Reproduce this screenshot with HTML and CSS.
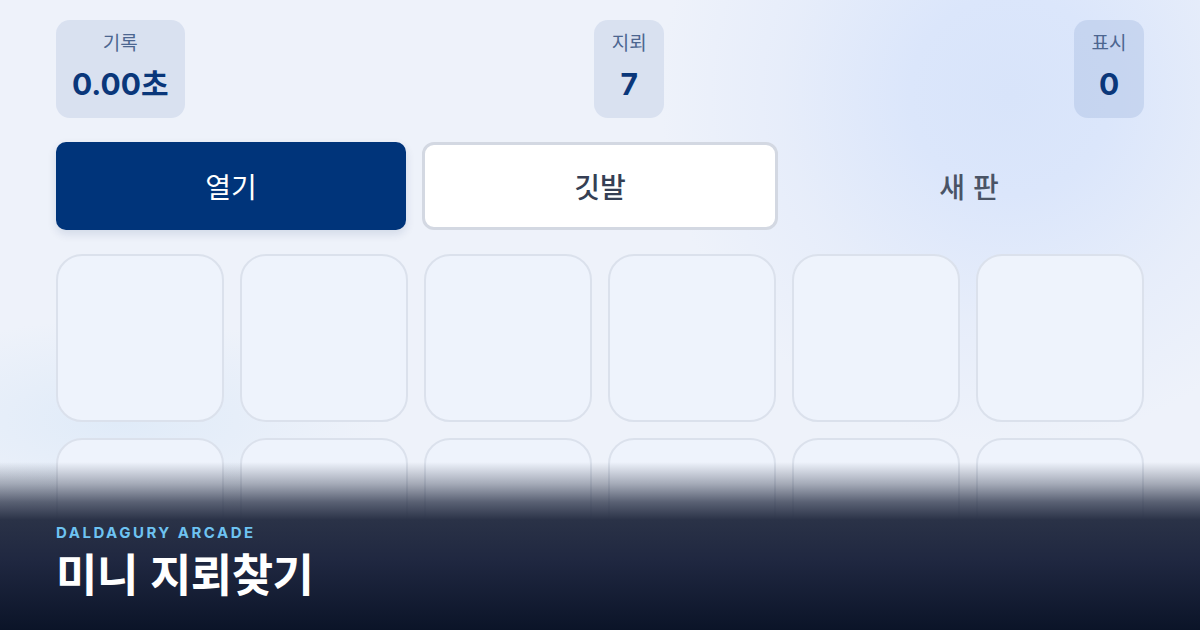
FILE: index.html
```html
<!DOCTYPE html>
<html lang="ko">
<head>
<meta charset="utf-8">
<title>미니 지뢰찾기</title>
<link rel="stylesheet" href="styles.css">
</head>
<body>
<div class="page">
  <div class="stats">
    <div class="stat"><div class="stat-label">기록</div><div class="stat-value">0.00초</div></div>
    <div class="stat"><div class="stat-label">지뢰</div><div class="stat-value">7</div></div>
    <div class="stat stat-glow"><div class="stat-label">표시</div><div class="stat-value">0</div></div>
  </div>
  <div class="actions">
    <button class="btn btn-primary">열기</button>
    <button class="btn btn-outline">깃발</button>
    <button class="btn btn-ghost">새 판</button>
  </div>
  <div class="board">
    <div class="cell"></div><div class="cell"></div><div class="cell"></div><div class="cell"></div><div class="cell"></div><div class="cell"></div>
    <div class="cell"></div><div class="cell"></div><div class="cell"></div><div class="cell"></div><div class="cell"></div><div class="cell"></div>
  </div>
</div>
<div class="banner">
  <div class="brand">DALDAGURY ARCADE</div>
  <div class="title">미니 지뢰찾기</div>
</div>
</body>
</html>
```
FILE: styles.css
```css
* { box-sizing: border-box; }
html, body { margin: 0; padding: 0; }
body {
  width: 1200px;
  height: 630px;
  overflow: hidden;
  position: relative;
  font-family: "Noto Sans CJK KR", "Noto Sans", sans-serif;
  background:
    radial-gradient(circle at 1010px 95px, #d8e4fa 0, #dbe6fb 100px, rgba(226,234,250,0.6) 230px, rgba(238,242,250,0) 350px),
    radial-gradient(ellipse at 120px 420px, rgba(222,234,248,0.9) 0, rgba(238,242,250,0) 260px),
    #eef2fa;
}
.page {
  padding: 20px 56px 0;
}
.stats {
  display: flex;
  justify-content: space-between;
  align-items: flex-start;
}
.stat {
  background: rgba(190, 205, 228, 0.45);
  border-radius: 14px;
  padding: 9px 16px 14px;
  display: flex;
  flex-direction: column;
  align-items: center;
  min-width: 70px;
}
.stat-glow { background: rgba(180, 198, 232, 0.55); }
.stat-label {
  font-size: 19px;
  line-height: 26px;
  color: #4c6690;
}
.stat-value {
  margin-top: 9px;
  font-family: "Inter", "Noto Sans CJK KR", sans-serif;
  font-size: 30px;
  line-height: 40px;
  font-weight: 700;
  color: #0a377a;
}
.actions {
  margin-top: 24px;
  display: grid;
  grid-template-columns: 1fr 356px 1fr;
  gap: 16px;
}
.btn {
  height: 88px;
  border-radius: 10px;
  font-family: "Noto Sans CJK KR", sans-serif;
  font-size: 28px;
  border: none;
  margin: 0;
  padding: 0;
}
.btn-primary {
  background: #00347a;
  color: #fff;
  font-weight: 400;
  box-shadow: 0 4px 10px rgba(0, 40, 100, 0.12);
}
.btn-outline {
  background: #fff;
  border: 3px solid #d3d8e2;
  border-radius: 12px;
  color: #353f54;
  font-weight: 500;
}
.btn-ghost {
  background: transparent;
  color: #4a5466;
  font-weight: 500;
}
.board {
  margin-top: 24px;
  display: grid;
  grid-template-columns: repeat(6, 1fr);
  gap: 16px;
}
.cell {
  height: 168px;
  border-radius: 26px;
  border: 2px solid #dbe1ec;
  background: #eef3fc;
}
.banner {
  position: absolute;
  left: 0;
  right: 0;
  bottom: 0;
  height: 168px;
  padding: 62px 56px 0;
  background: linear-gradient(180deg,
    rgba(14, 22, 42, 0) 0px,
    rgba(26, 34, 56, 0.35) 22px,
    rgba(40, 48, 70, 0.75) 40px,
    #2a3247 58px,
    #1f2740 100px,
    #0b1428 168px);
}
.brand {
  font-family: "Inter", "Noto Sans", sans-serif;
  font-size: 15px;
  font-weight: 700;
  letter-spacing: 2.5px;
  color: #6ec3f2;
  line-height: 18px;
}
.title {
  margin-top: 3px;
  font-size: 45px;
  line-height: 56px;
  font-weight: 700;
  color: #ffffff;
  letter-spacing: -0.5px;
}
```
